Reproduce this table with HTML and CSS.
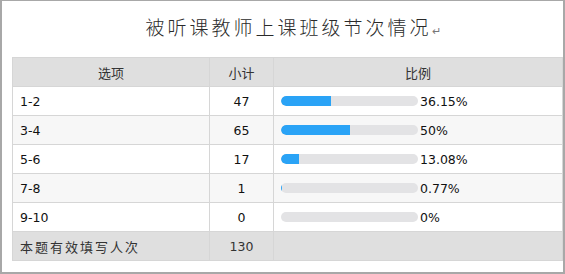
FILE: index.html
```html
<!DOCTYPE html>
<html lang="zh">
<head>
<meta charset="utf-8">
<link rel="stylesheet" href="styles.css">
</head>
<body>
<div class="frame">
  <h1 class="title">被听课教师上课班级节次情况<span class="ret">↵</span></h1>
  <table class="stats">
    <colgroup>
      <col class="c-opt"><col class="c-cnt"><col class="c-pct">
    </colgroup>
    <thead>
      <tr><th>选项</th><th>小计</th><th>比例</th></tr>
    </thead>
    <tbody>
      <tr><td class="opt">1-2</td><td class="cnt">47</td><td class="pct"><div class="cell"><span class="bar"><span class="fill" style="width:36.15%"></span></span><span class="num">36.15%</span></div></td></tr>
      <tr class="alt"><td class="opt">3-4</td><td class="cnt">65</td><td class="pct"><div class="cell"><span class="bar"><span class="fill" style="width:50%"></span></span><span class="num">50%</span></div></td></tr>
      <tr><td class="opt">5-6</td><td class="cnt">17</td><td class="pct"><div class="cell"><span class="bar"><span class="fill" style="width:13.08%"></span></span><span class="num">13.08%</span></div></td></tr>
      <tr class="alt"><td class="opt">7-8</td><td class="cnt">1</td><td class="pct"><div class="cell"><span class="bar"><span class="fill" style="width:0.77%"></span></span><span class="num">0.77%</span></div></td></tr>
      <tr><td class="opt">9-10</td><td class="cnt">0</td><td class="pct"><div class="cell"><span class="bar"><span class="fill" style="width:0%"></span></span><span class="num">0%</span></div></td></tr>
      <tr class="total"><td class="opt cjk">本题有效填写人次</td><td class="cnt">130</td><td class="pct"></td></tr>
    </tbody>
  </table>
</div>
</body>
</html>
```

FILE: styles.css
```css
html, body {
  margin: 0;
  padding: 0;
  background: #fff;
}
.frame {
  box-sizing: border-box;
  width: 565px;
  height: 274px;
  border: 2px solid #a8a8a8;
  border-top-width: 1px;
  padding: 0 1px 0 10px;
}
.title {
  margin: 0;
  height: 56px;
  box-sizing: border-box;
  padding: 13px 0 0 12px;
  text-align: center;
  font-family: "Noto Sans CJK SC", sans-serif;
  font-weight: 300;
  font-size: 19px;
  line-height: 26px;
  letter-spacing: 3px;
  color: #2a2a2a;
}
.ret {
  font-family: "DejaVu Sans", sans-serif;
  font-size: 11px;
  letter-spacing: 0;
  color: #777;
}
.stats {
  width: 550px;
  border-collapse: collapse;
  table-layout: fixed;
  font-family: "DejaVu Sans", sans-serif;
  font-size: 12.5px;
  color: #111;
}
.c-opt { width: 197px; }
.c-cnt { width: 64px; }
.c-pct { width: 289px; }
.stats th, .stats td {
  border: 1px solid #d6d6d6;
  height: 28px;
  padding: 0;
}
.stats th {
  background: #dfdfdf;
  font-family: "Noto Sans CJK SC", sans-serif;
  font-weight: 400;
  font-size: 13px;
  color: #333;
  text-align: center;
}
.stats tr.alt td { background: #f7f7f7; }
.stats tr.total td { background: #dfdfdf; color: #333; }
.opt { padding-left: 7px !important; }
.cjk {
  font-family: "Noto Sans CJK SC", sans-serif;
  font-size: 13px;
  letter-spacing: 2px;
}
.cnt { text-align: center; }
.pct { padding-left: 7px !important; }
.cell {
  display: flex;
  align-items: center;
}
.bar {
  display: block;
  width: 137px;
  height: 10px;
  border-radius: 5px;
  background: #e3e3e5;
  overflow: hidden;
  margin-right: 2px;
}
.fill {
  display: block;
  height: 100%;
  background: #2aa3f6;
  border-radius: 5px 0 0 5px;
}
```
